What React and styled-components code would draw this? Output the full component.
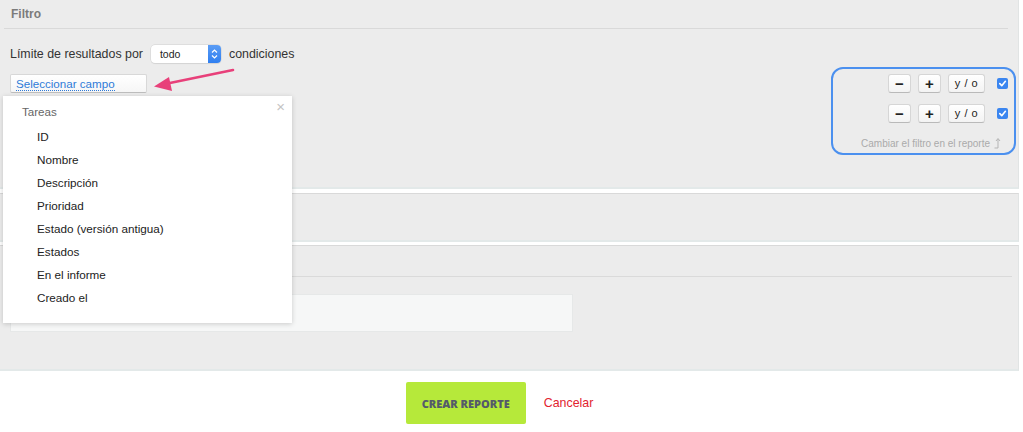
import styled, { createGlobalStyle } from 'styled-components';

const GlobalStyle = createGlobalStyle`
  html, body {
    margin: 0;
    background: #fff;
    overflow: hidden;
  }
  body {
    font-family: 'Liberation Sans', Arial, sans-serif;
    color: #333;
  }
`;

const fields = [
  'ID',
  'Nombre',
  'Descripción',
  'Prioridad',
  'Estado (versión antigua)',
  'Estados',
  'En el informe',
  'Creado el',
];

const ConditionRow = () => (
  <Row>
    <SmallButton wide={false}>−</SmallButton>
    <SmallButton wide={false}>+</SmallButton>
    <SmallButton wide>y / o</SmallButton>
    <Check>
      <svg width="9" height="9" viewBox="0 0 10 10">
        <path d="M2 5.2 L4.2 7.4 L8.2 2.6" stroke="#fff" strokeWidth="1.8" fill="none" strokeLinecap="round" strokeLinejoin="round" />
      </svg>
    </Check>
  </Row>
);

const Arrow = () => (
  <ArrowSvg width="100" height="30" viewBox="0 0 100 30">
    <path d="M90 4 L22 18" stroke="#e8407a" strokeWidth="2.6" strokeLinecap="round" />
    <path d="M11 20.5 L26 11 L29 25 Z" fill="#e8407a" />
  </ArrowSvg>
);

const FieldMenu = () => (
  <Menu>
    <MenuTitle>Tareas</MenuTitle>
    <Close>×</Close>
    {fields.map((f) => (
      <MenuItem key={f}>{f}</MenuItem>
    ))}
  </Menu>
);

const App = () => (
  <Page>
    <GlobalStyle />
    <Panel>
      <Header>Filtro</Header>
      <FilterBody>
        <LeftCol>
          <LimitRow>
            Límite de resultados por
            <Select>
              <span>todo</span>
              <Stepper>
                <svg width="7" height="12" viewBox="0 0 7 12">
                  <path d="M1 4.5 L3.5 2 L6 4.5 M1 7.5 L3.5 10 L6 7.5" stroke="#fff" strokeWidth="1.2" fill="none" />
                </svg>
              </Stepper>
            </Select>
            condiciones
          </LimitRow>
          <FieldPicker>
            <PickerButton>
              <span>Seleccionar campo</span>
            </PickerButton>
            <Arrow />
            <FieldMenu />
          </FieldPicker>
        </LeftCol>
        <ConditionsBox>
          <ConditionRow />
          <ConditionRow />
          <Hint>
            Cambiar el filtro en el reporte
            <svg width="8" height="12" viewBox="0 0 8 12">
              <path d="M0.5 11 L4 11 L4 2 M2 4 L4 1.5 L6 4" stroke="#b5b5b5" strokeWidth="1" fill="none" />
            </svg>
          </Hint>
        </ConditionsBox>
      </FilterBody>
    </Panel>
    <Panel>
      <EmptyBody />
    </Panel>
    <Panel>
      <SubHeader />
      <InputBody>
        <Input />
      </InputBody>
    </Panel>
    <Footer>
      <CreateButton>Crear reporte</CreateButton>
      <CancelLink>Cancelar</CancelLink>
    </Footer>
  </Page>
);

export default App;

const Page = styled.div`
  width: 1019px;
`;

const Panel = styled.section`
  background: #ececec;
  border-top: 1px solid #d9d9d9;
  border-right: 1px solid #e1e4e4;
  border-bottom: 2px solid #e3e9e9;
  margin-bottom: 3px;

  &:first-child {
    border-top: none;
    margin-bottom: 4px;
  }
`;

const Header = styled.div`
  margin: 0 10px 0 4px;
  padding: 7px 7px;
  line-height: 14px;
  font-size: 12px;
  font-weight: bold;
  color: #7b7b7b;
  border-bottom: 1px solid #d9d9d9;
`;

const FilterBody = styled.div`
  display: flex;
  justify-content: space-between;
  align-items: flex-start;
  padding: 16px 2px 32px 10px;
`;

const LeftCol = styled.div`
  display: flex;
  flex-direction: column;
  gap: 11px;
`;

const LimitRow = styled.div`
  display: flex;
  align-items: center;
  gap: 8px;
  height: 18px;
  font-size: 12.4px;
  color: #333;
`;

const Select = styled.div`
  display: flex;
  align-items: center;
  justify-content: space-between;
  width: 70px;
  height: 18px;
  box-sizing: border-box;
  background: #fff;
  border-radius: 4px;
  box-shadow: 0 0 0 0.5px #cfcfcf, 0 1px 1px rgba(0, 0, 0, 0.08);
  font-size: 10.5px;
  color: #222;

  span {
    padding-left: 9px;
  }
`;

const Stepper = styled.div`
  display: flex;
  align-items: center;
  justify-content: center;
  width: 13px;
  height: 18px;
  background: linear-gradient(#5a9cf5, #2f7ff0);
  border-radius: 0 4px 4px 0;
`;

const FieldPicker = styled.div`
  position: relative;
  width: 137px;
`;

const PickerButton = styled.button`
  display: block;
  width: 137px;
  height: 19px;
  padding: 0 0 0 5px;
  text-align: left;
  background: linear-gradient(#fff, #f6f6f6);
  border: 1px solid #d8d8d8;
  border-bottom-color: #bdbdbd;
  border-radius: 2px;
  font-family: 'Liberation Sans', Arial, sans-serif;
  font-size: 11.6px;
  color: #2f7bd8;

  span {
    border-bottom: 1px dotted #2f7bd8;
  }
`;

const ArrowSvg = styled.svg`
  position: absolute;
  left: 133px;
  top: -8px;
`;

const Menu = styled.div`
  position: absolute;
  left: -7px;
  top: 22px;
  width: 289px;
  height: 227px;
  box-sizing: border-box;
  padding: 8px 0 0 19px;
  background: #fff;
  box-shadow: 0 1px 5px rgba(0, 0, 0, 0.18);
  z-index: 5;
`;

const MenuTitle = styled.div`
  font-size: 11.6px;
  line-height: 16px;
  color: #666;
  margin-bottom: 5px;
`;

const Close = styled.span`
  position: absolute;
  top: 2px;
  right: 7px;
  font-size: 15px;
  color: #c4c4c4;
`;

const MenuItem = styled.div`
  padding-left: 15px;
  font-size: 11.7px;
  line-height: 23px;
  color: #222;
`;

const ConditionsBox = styled.div`
  margin-top: 22px;
  width: 185px;
  box-sizing: border-box;
  border: 2px solid #4b90ef;
  border-radius: 12px;
  padding: 5px 6px 4px 0;
  display: flex;
  flex-direction: column;
  align-items: flex-end;
  gap: 11px;
`;

const Row = styled.div`
  display: flex;
  align-items: center;
  gap: 7px;
`;

const SmallButton = styled.button`
  width: ${(p) => (p.wide ? '37px' : '23px')};
  height: 19px;
  padding: 0;
  margin-right: ${(p) => (p.wide ? '5px' : '0')};
  background: linear-gradient(#fff, #f3f3f3);
  border: 1px solid #d6d6d6;
  border-bottom-color: #b9b9b9;
  border-radius: 3px;
  font-family: 'Liberation Sans', Arial, sans-serif;
  font-size: ${(p) => (p.wide ? '11px' : '15px')};
  font-weight: ${(p) => (p.wide ? 'normal' : 'bold')};
  letter-spacing: ${(p) => (p.wide ? '0.5px' : '0')};
  line-height: 17px;
  color: #222;
`;

const Check = styled.span`
  display: flex;
  align-items: center;
  justify-content: center;
  width: 11px;
  height: 11px;
  border-radius: 2px;
  background: #3b86f0;
`;

const Hint = styled.div`
  display: flex;
  align-items: flex-end;
  gap: 4px;
  margin-top: 3px;
  margin-right: 6px;
  font-size: 10px;
  color: #aaa;
`;

const EmptyBody = styled.div`
  height: 46px;
`;

const SubHeader = styled.div`
  height: 30px;
  margin: 0 6px 0 10px;
  border-bottom: 1px solid #dadada;
`;

const InputBody = styled.div`
  padding: 17px 0 37px 10px;
`;

const Input = styled.div`
  width: 563px;
  height: 38px;
  box-sizing: border-box;
  background: #f6f7f7;
  border: 1px solid #e6e8e8;
`;

const Footer = styled.div`
  display: flex;
  align-items: center;
  justify-content: center;
  gap: 18px;
  margin-top: 11px;
  padding-right: 20px;
`;

const CreateButton = styled.button`
  width: 120px;
  height: 42px;
  border: none;
  border-radius: 2px;
  background: #b6e93a;
  font-family: 'Open Sans', 'Liberation Sans', sans-serif;
  font-size: 11px;
  font-weight: 800;
  text-transform: uppercase;
  color: #545a6a;
`;

const CancelLink = styled.a`
  font-size: 12.4px;
  color: #e2232f;
`;
